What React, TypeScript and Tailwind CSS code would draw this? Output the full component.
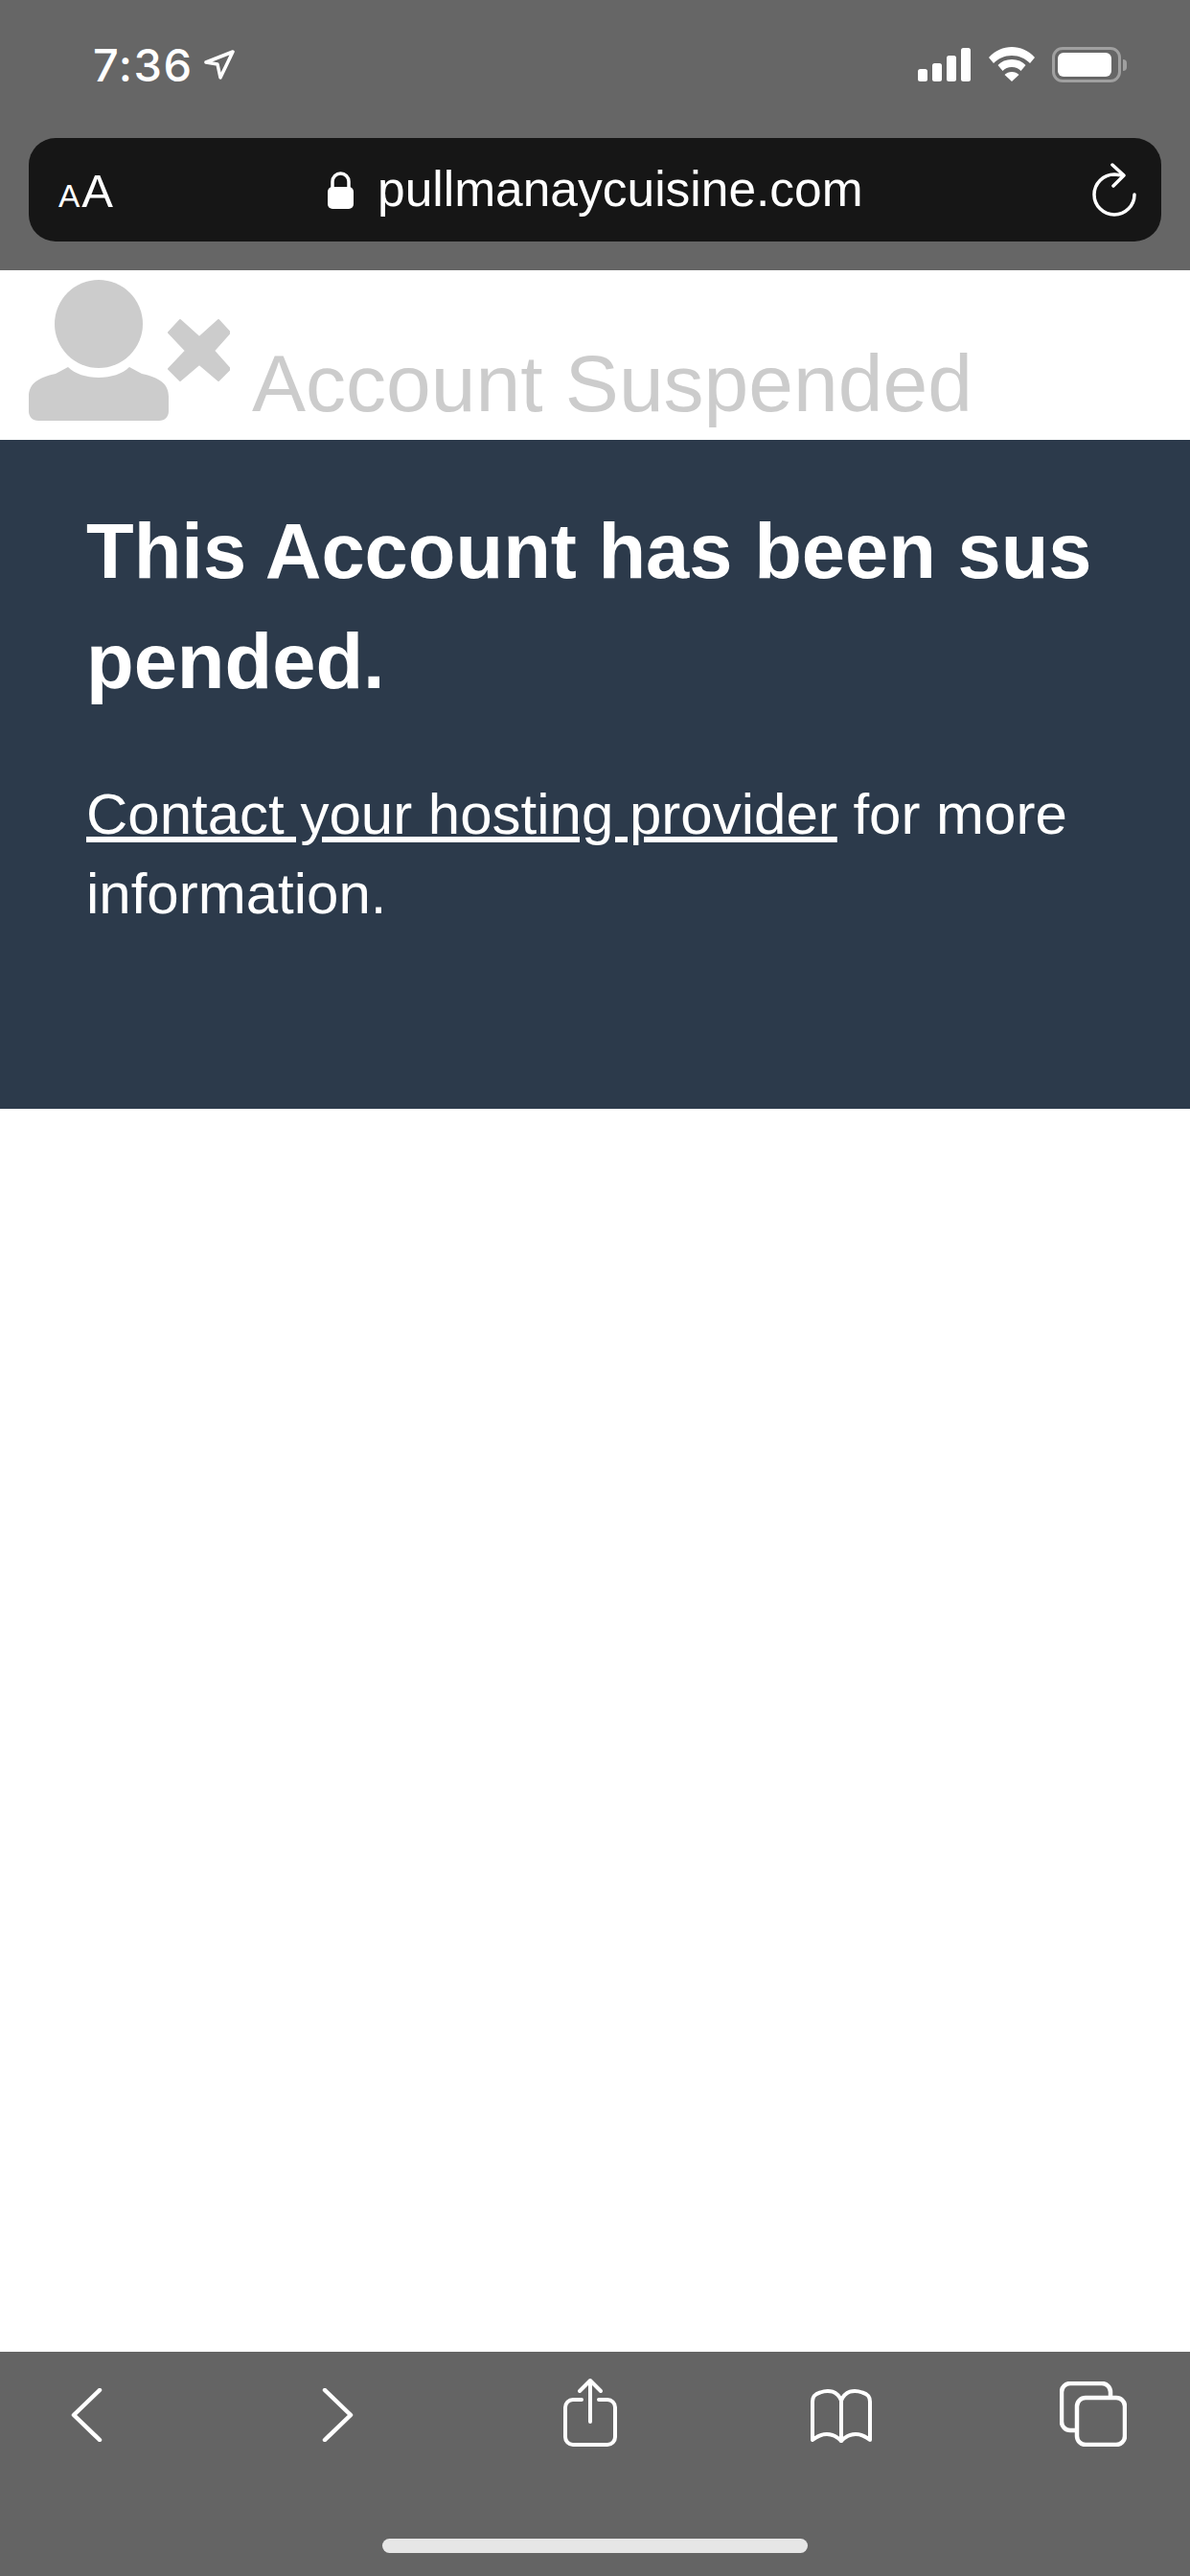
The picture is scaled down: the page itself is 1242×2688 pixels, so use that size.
const sans = "font-['Liberation_Sans',Arial,sans-serif]";
const ui = "font-['Inter','Liberation_Sans',sans-serif]";

function StatusBar() {
  return (
    <div className="flex h-[144px] items-start justify-between pl-[97px] pr-[66px] pt-[49px]">
      <div className="flex items-start">
        <span className={`${ui} text-[47px] font-medium leading-[38px] tracking-[1.5px] text-white`}>7:36</span>
        <svg className="ml-[11px] mt-[3px]" width="33" height="32" viewBox="0 0 33 32" fill="none">
          <path d="M30 2 2 13l12 2 3 14Z" stroke="#fff" strokeWidth="3.5" strokeLinejoin="round" />
        </svg>
      </div>
      <div className="flex items-start">
        <svg className="mt-[1px]" width="55" height="35" viewBox="0 0 55 35" fill="#fff">
          <rect x="0" y="22" width="10" height="13" rx="2.5" />
          <rect x="15" y="16" width="10" height="19" rx="2.5" />
          <rect x="30" y="8" width="10" height="27" rx="2.5" />
          <rect x="45" y="0" width="10" height="35" rx="2.5" />
        </svg>
        <svg className="ml-[19px]" width="48" height="36" viewBox="0 0 48 36" fill="#fff">
          <path d="M24 0C15 0 7 3.500 0 11l5 6c5-5 11-8 19-8s14 3 19 8l5-6C41 3.500 33 0 24 0Z" />
          <path d="M24 13c-6 0-11 2-14.500 6l5 6c2.500-2.500 5.500-4 9.500-4s7 1.500 9.500 4l5-6C35 15 30 13 24 13Z" />
          <path d="M24 26c-3 0-5.500 1-7.500 3l7.500 7 7.500-7c-2-2-4.500-3-7.500-3Z" />
        </svg>
        <div className="ml-[18px] flex items-center">
          <div className="flex h-[37px] w-[72px] items-center rounded-[11px] border-[3px] border-[#a0a0a0] pl-[3px]">
            <div className="h-[25px] w-[56px] rounded-[6px] bg-white" />
          </div>
          <div className="ml-[2px] h-[12px] w-[4px] rounded-r-full bg-[#a0a0a0]" />
        </div>
      </div>
    </div>
  );
}

function UrlBar() {
  return (
    <div className="mx-[30px] flex h-[108px] items-center rounded-[28px] bg-[#161616] pl-[31px] pr-[26px]">
      <div className={`${sans} flex w-[59px] items-baseline pt-[3px] text-white`}>
        <span className="text-[33.5px] leading-none">A</span>
        <span className="ml-[2px] text-[49px] leading-none">A</span>
      </div>
      <div className="ml-[222px] flex items-center">
        <svg width="27" height="39" viewBox="0 0 27 39" fill="none">
          <path d="M5 18V10.500a8.500 8.500 0 0 1 17 0V18" stroke="#fff" strokeWidth="3.500" />
          <rect x="0" y="16" width="27" height="23" rx="5" fill="#fff" />
        </svg>
        <span className={`${sans} ml-[25px] text-[51.5px] leading-none text-white`}>pullmanaycuisine.com</span>
      </div>
      <svg className="ml-auto" width="46" height="56" viewBox="0 0 46 56" fill="none" stroke="#fff" strokeWidth="3.500" strokeLinecap="round" strokeLinejoin="round">
        <path d="M44 33A21 21 0 1 1 23 12L32 13" />
        <path d="M21 2 33 13 22 24" />
      </svg>
    </div>
  );
}

function BrandRow() {
  return (
    <div className="flex h-[177px] items-start bg-white pl-[30px]">
      <svg className="mt-[10px]" width="210" height="148" viewBox="0 0 210 148" fill="#cccccc">
        <circle cx="73" cy="46" r="46" />
        <path d="M41 91C48 98 60 102 73 102S98 98 105 91L118 98C136 102 146 108 146 122V137C146 143 142 147 136 147H10C4 147 0 143 0 137V122C0 108 10 102 28 98Z" />
        <path
          d="M158 42 178 60 198 42 210 55 193 74 210 93 198 105 178 88 158 105 146 93 164 74 146 55Z"
          stroke="#cccccc"
          strokeWidth="2"
          strokeLinejoin="round"
        />
      </svg>
      <span className={`${sans} ml-[23px] mt-[70px] text-[84px] leading-[96px] text-[#cccccc]`}>Account Suspended</span>
    </div>
  );
}

function Notice() {
  return (
    <div className={`${sans} h-[698px] bg-[#2c3a4b] px-[90px] pt-[58px] text-white`}>
      <h1 className="break-all text-[81.3px] font-bold leading-[115px]">This Account has been suspended.</h1>
      <p className="mt-[61px] text-[60px] leading-[83px]">
        <a className="underline">Contact your hosting provider</a> for more information.
      </p>
    </div>
  );
}

function BottomBar() {
  return (
    <div className="flex h-[234px] flex-col bg-[#646464]">
      <div className="flex h-[99px] items-start justify-between pl-[50px] pr-[61px] pt-[27px]">
        <div className="flex w-[80px] justify-center pt-[11px]">
          <svg width="33" height="56" viewBox="0 0 33 56" fill="none" stroke="#fff" strokeWidth="4.500" strokeLinecap="round" strokeLinejoin="round">
            <path d="M30 2 3 28l27 26" />
          </svg>
        </div>
        <div className="flex w-[80px] justify-center pt-[11px]">
          <svg width="33" height="56" viewBox="0 0 33 56" fill="none" stroke="#fff" strokeWidth="4.500" strokeLinecap="round" strokeLinejoin="round">
            <path d="M3 2l27 26-27 26" />
          </svg>
        </div>
        <div className="flex w-[80px] justify-center">
          <svg width="56" height="73" viewBox="0 0 56 73" fill="none" stroke="#fff" strokeWidth="4" strokeLinecap="round" strokeLinejoin="round">
            <path d="M19 23H10a8 8 0 0 0-8 8V62a8 8 0 0 0 8 8H46a8 8 0 0 0 8-8V31a8 8 0 0 0-8-8H37" />
            <path d="M28 46V3M17 14 28 3 39 14" />
          </svg>
        </div>
        <div className="flex w-[80px] justify-center pt-[10px]">
          <svg width="66" height="60" viewBox="0 0 66 60" fill="none" stroke="#fff" strokeWidth="4" strokeLinecap="round" strokeLinejoin="round">
            <path d="M3 55V15C3 9 6 7 11 5.500 20 2 29 4 33 14 37 4 46 2 55 5.500 60 7 63 9 63 15V55C58 51 54 49 48 49 42 49 37 52 33 56 29 52 24 49 18 49 12 49 8 51 3 55Z" />
            <path d="M33 14V56" />
          </svg>
        </div>
        <div className="flex w-[80px] justify-center pt-[4px]">
          <svg width="70" height="68" viewBox="0 0 70 68" fill="none" stroke="#fff" strokeWidth="4.500" strokeLinejoin="round">
            <path d="M17 51H11a9 9 0 0 1-9-9V11a9 9 0 0 1 9-9H44a9 9 0 0 1 9 9V16" />
            <rect x="18" y="17" width="50" height="49" rx="9" />
          </svg>
        </div>
      </div>
      <div className="mx-auto mt-[96px] h-[15px] w-[444px] rounded-full bg-[#e6e6e6]" />
    </div>
  );
}

export default function App() {
  return (
    <div className="flex h-[2688px] w-[1242px] flex-col bg-white">
      <div className="h-[282px] bg-[#666666]">
        <StatusBar />
        <UrlBar />
      </div>
      <BrandRow />
      <Notice />
      <div className="flex-1 bg-white" />
      <BottomBar />
    </div>
  );
}
